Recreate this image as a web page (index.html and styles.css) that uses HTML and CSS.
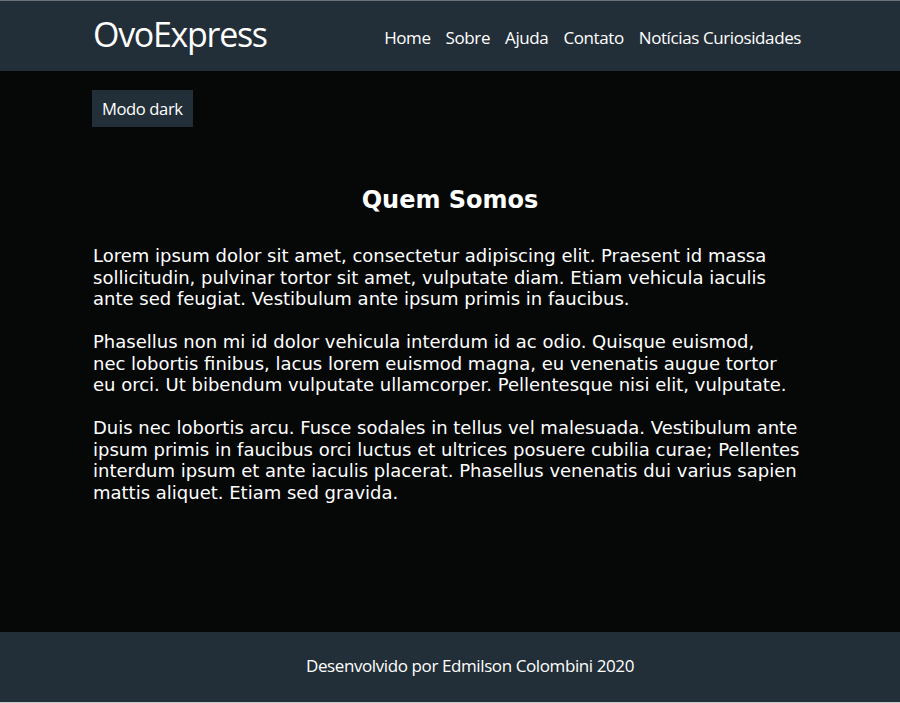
FILE: index.html
```html
<!DOCTYPE html>
<html lang="pt-BR">
<head>
<meta charset="utf-8">
<title>OvoExpress</title>
<link rel="stylesheet" href="styles.css">
</head>
<body>
<header class="topbar">
  <div class="container bar-inner">
    <div class="logo">OvoExpress</div>
    <nav class="nav">
      <a href="#">Home</a>
      <a href="#">Sobre</a>
      <a href="#">Ajuda</a>
      <a href="#">Contato</a>
      <a href="#" class="tight">Notícias</a>
      <a href="#">Curiosidades</a>
    </nav>
  </div>
</header>
<main class="main">
  <div class="container">
    <button class="dark-btn">Modo dark</button>
    <h1 class="title">Quem Somos</h1>
    <p>Lorem ipsum dolor sit amet, consectetur adipiscing elit. Praesent id massa sollicitudin, pulvinar tortor sit amet, vulputate diam. Etiam vehicula iaculis ante sed feugiat. Vestibulum ante ipsum primis in faucibus.</p>
    <p>Phasellus non mi id dolor vehicula interdum id ac odio. Quisque euismod,<br>nec lobortis finibus, lacus lorem euismod magna, eu venenatis augue tortor eu orci. Ut bibendum vulputate ullamcorper. Pellentesque nisi elit, vulputate.</p>
    <p>Duis nec lobortis arcu. Fusce sodales in tellus vel malesuada. Vestibulum ante ipsum primis in faucibus orci luctus et ultrices posuere cubilia curae; Pellentes interdum ipsum et ante iaculis placerat. Phasellus venenatis dui varius sapien mattis aliquet. Etiam sed gravida.</p>
  </div>
</main>
<footer class="footer">Desenvolvido por Edmilson Colombini 2020</footer>
</body>
</html>
```
FILE: styles.css
```css
html, body {
  margin: 0;
  padding: 0;
  height: 100%;
}
body {
  background: #060808;
  color: #ffffff;
  display: flex;
  flex-direction: column;
  border-top: 1px solid #6b7177;
  border-bottom: 1px solid #c3cbcc;
  box-sizing: border-box;
}
.container {
  width: 714px;
  margin: 0 auto;
}
.topbar {
  background: #232f38;
  height: 70px;
  flex: none;
}
.bar-inner {
  height: 100%;
  display: flex;
  align-items: center;
  justify-content: space-between;
}
.logo {
  font-family: "Open Sans", sans-serif;
  font-size: 34px;
  letter-spacing: -1.3px;
  color: #ffffff;
  margin-top: -4px;
}
.nav {
  display: flex;
  gap: 15px;
  font-family: "Open Sans", sans-serif;
  font-size: 17px;
  letter-spacing: -0.4px;
  margin-top: 2px;
  margin-right: 6px;
}
.nav a {
  color: #ffffff;
  text-decoration: none;
}
.nav a.tight {
  margin-right: -11px;
}
.main {
  flex: 1;
  padding-top: 19px;
}
.dark-btn {
  display: block;
  background: #232f38;
  color: #ffffff;
  border: none;
  margin-left: -1px;
  height: 37px;
  padding: 0 10px;
  font-family: "Open Sans", sans-serif;
  font-size: 16.6px;
  letter-spacing: -0.4px;
}
.title {
  font-family: "DejaVu Sans", sans-serif;
  font-size: 24px;
  font-weight: bold;
  text-align: center;
  margin: 58px 0 30px;
  line-height: 30px;
}
p {
  font-family: "DejaVu Sans", sans-serif;
  font-size: 18px;
  line-height: 21.5px;
  margin: 0 0 21.5px;
  padding-right: 4px;
}
.footer {
  flex: none;
  background: #222f38;
  height: 70px;
  box-sizing: border-box;
  padding-bottom: 4px;
  padding-left: 40px;
  display: flex;
  align-items: center;
  justify-content: center;
  font-family: "Open Sans", sans-serif;
  font-size: 17px;
  letter-spacing: -0.4px;
  color: #ffffff;
}
```
